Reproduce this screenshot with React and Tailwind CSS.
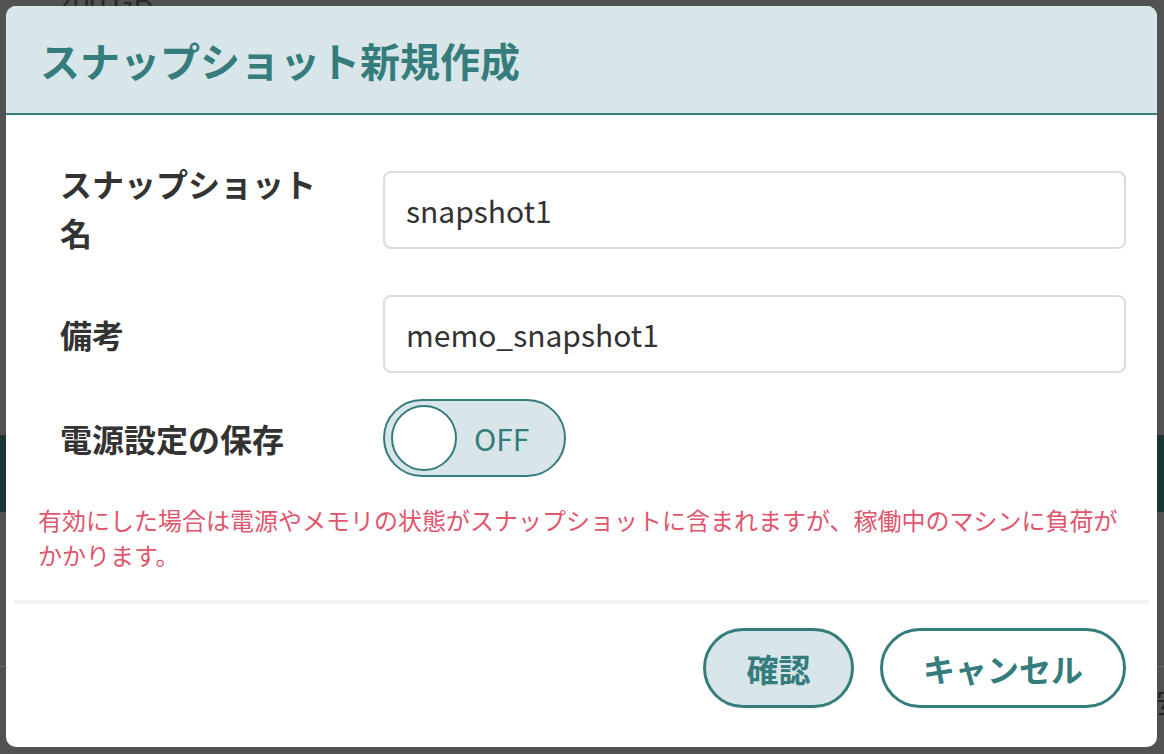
export default function App() {
  const font = { fontFamily: '"Noto Sans CJK JP", "Noto Sans", sans-serif' };

  return (
    <div className="relative w-[1164px] h-[754px] overflow-hidden bg-[#525252]" style={font}>
      {/* page behind the overlay */}
      <div className="absolute inset-0">
        <div className="absolute left-[56px] top-[-22px] text-[30px] text-[#2a2a2a]">200 GB</div>
        <div className="absolute left-0 right-0 top-[435px] h-[77px] bg-[#1a3534]" />
        <div className="absolute left-0 right-0 top-[666px] h-px bg-[#6a6a6a]" />
        <div className="absolute left-[1156px] top-[680px] text-[28px] text-[#222]">安</div>
      </div>

      <div className="relative pt-[6px] pl-[6px]">
        <div className="w-[1151px] h-[741px] bg-white rounded-[10px] overflow-hidden flex flex-col">
          {/* header */}
          <div className="h-[109px] bg-[#d8e6e9] border-b-2 border-[#357c7c] flex items-center pl-[34px]">
            <h1 className="text-[40px] font-bold text-[#357c7c] leading-none">スナップショット新規作成</h1>
          </div>

          {/* body */}
          <div className="pt-[56px] pl-[54px] pr-[31px]">
            <div className="flex">
              <div className="w-[323px] pr-[40px] text-[32px] font-bold text-[#333] leading-[49px] -mt-[12px]">
                スナップショット名
              </div>
              <div className="flex-1 h-[78px] border-2 border-[#dcdcdc] rounded-[8px] flex items-center px-[21px] text-[30px] text-[#333]">
                snapshot1
              </div>
            </div>

            <div className="flex items-center mt-[38px]">
              <div className="w-[323px] pr-[40px] text-[32px] font-bold text-[#333] leading-[50px]">備考</div>
              <div className="flex-1 h-[78px] border-2 border-[#dcdcdc] rounded-[8px] flex items-center px-[21px] text-[30px] text-[#333]">
                memo_snapshot1
              </div>
            </div>

            <div className="flex items-center mt-[26px]">
              <div className="w-[323px] pr-[40px] text-[32px] font-bold text-[#333] leading-[50px]">電源設定の保存</div>
              <div className="w-[183px] h-[78px] rounded-full border-2 border-[#357c7c] bg-[#d8e6e9] flex items-center pl-[6px]">
                <div className="w-[66px] h-[66px] rounded-full bg-white border-2 border-[#357c7c]" />
                <span className="ml-[17px] text-[30px] text-[#357c7c] leading-none">OFF</span>
              </div>
            </div>
          </div>

          <p className="mt-[25px] pl-[32px] pr-[30px] text-[24px] leading-[35px] text-[#e0566e]">
            有効にした場合は電源やメモリの状態がスナップショットに含まれますが、稼働中のマシンに負荷がかかります。
          </p>

          <div className="mx-[8px] mt-[28px] h-[4px] bg-[#f2f2f2]" />

          <div className="flex justify-end gap-[26px] pr-[31px] pt-[24px]">
            <button className="w-[151px] h-[80px] rounded-full border-[3px] border-[#357c7c] bg-[#d8e6e9] text-[32px] font-bold text-[#357c7c]">
              確認
            </button>
            <button className="w-[246px] h-[80px] rounded-full border-[3px] border-[#357c7c] bg-white text-[32px] font-bold text-[#357c7c]">
              キャンセル
            </button>
          </div>
        </div>
      </div>
    </div>
  );
}
